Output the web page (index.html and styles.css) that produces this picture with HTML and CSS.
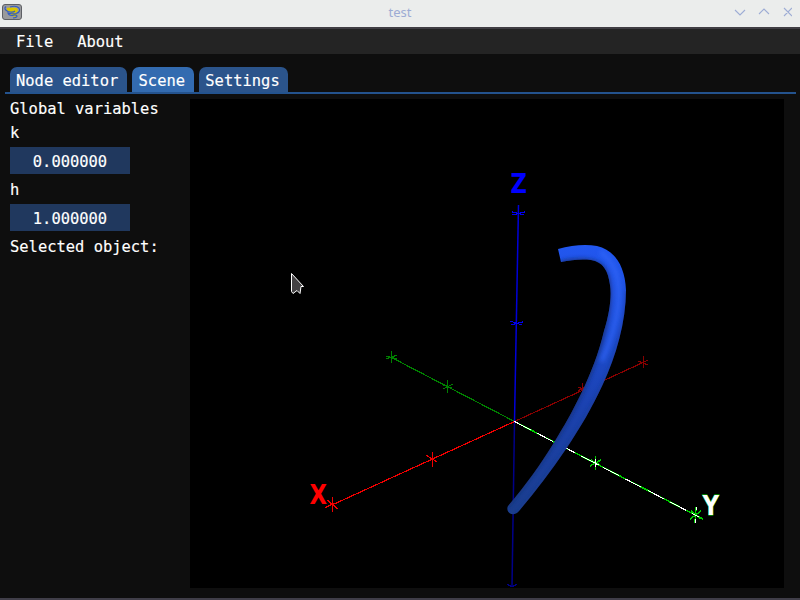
FILE: index.html
```html
<!DOCTYPE html>
<html lang="en">
<head>
<meta charset="utf-8">
<title>test</title>
<link rel="stylesheet" href="styles.css">
</head>
<body>
<header class="titlebar">
  <svg class="app-icon" width="20" height="16" viewBox="0 0 20 16">
    <rect x=".5" y=".5" width="19" height="15" rx="2.5" fill="#999a9c" stroke="#5e6065"/>
    <path d="M5 4Q8 3 15 4Q17 7 14 9Q9 9 6 7Q4 6 5 4M9 9L15 9Q16 12 13 13L9 11Z" fill="#d8c400"/>
    <path d="M4 2.500Q1 5 6 7.500Q11 9 13 7M8 3Q14 1 17 4Q19 8 14 9.500Q7 10 6 9Q6 11 10 11.500Q14 10 15 12Q15 13.500 11 14" fill="none" stroke="#315cc0" stroke-width="1.1"/>
  </svg>
  <h1 class="title">test</h1>
  <svg class="window-buttons" width="60" height="14" viewBox="0 0 60 14" fill="none" stroke="#9eadd5" stroke-width="1.1">
    <path d="M3 5L8 10L13 5M27 9L32 4L37 9M52 3L60 11M60 3L52 11"/>
  </svg>
</header>
<nav class="menubar"><span>File</span><span>About</span></nav>
<main class="workspace">
  <div class="tabs">
    <div class="tab">Node editor</div>
    <div class="tab active">Scene</div>
    <div class="tab">Settings</div>
  </div>
  <div class="content">
    <aside class="sidebar">
      <div class="label">Global variables</div>
      <div class="label">k</div>
      <div class="field">0.000000</div>
      <div class="label">h</div>
      <div class="field">1.000000</div>
      <div class="label">Selected object:</div>
    </aside>
    <svg class="scene" width="594" height="489" viewBox="190 99 594 489">
      <defs>
        <linearGradient id="tube" gradientUnits="userSpaceOnUse" x1="0" y1="245" x2="0" y2="515">
          <stop offset="0" stop-color="#2257f0"/><stop offset=".3" stop-color="#1d4dd4"/>
          <stop offset=".6" stop-color="#1b42b0"/><stop offset="1" stop-color="#1b3e8c"/>
        </linearGradient>
        <clipPath id="tube-clip"><path d="M558 249C572 245 586 244 597 246C614 250 625 265 626 290C626 322 616 356 603 384C592 408 580 428 566 449C551 471 536 491 519 511C513 518 505 512 508 506C525 486 541 464 555 441C571 415 594 374 604 331C609 315 612 297 610 285C608 270 603 262 591 260C581 259 571 260 561 262Z"/></clipPath>
        <filter id="soft" filterUnits="userSpaceOnUse" x="480" y="220" width="180" height="320"><feGaussianBlur stdDeviation="2"/></filter>
      </defs>
      <rect x="190" y="99" width="594" height="489" fill="#000"/>
      <g fill="none" shape-rendering="crispEdges" stroke-width="1.2">
        <path stroke="#880000" d="M514.5 421.5L643 362.5M643.5 356V368M638 361L648 365M638 365L648 360M582.500 383V394M578 387L587 391M578 391L587 386"/>
        <path stroke="#008000" d="M514.500 421.500L391.500 357.500M391.500 351V363M386 356L397 359M386 359L397 355M447.500 380V393M443 385L452 388M443 389L453 384"/>
        <path stroke="#0000d8" stroke-width="1.500" shape-rendering="auto" d="M514.500 421.500L518.500 205"/>
        <path stroke="#0000f0" d="M512 212L524 215M512 215L525 212M510 321L522 325M511 325L523 322"/>
        <path stroke="#000088" stroke-width="1.500" shape-rendering="auto" d="M514.500 421.500L512 587"/>
        <path stroke="#000088" d="M507 584L512 587L517 584"/>
        <path stroke="#f00000" d="M514.500 421.500L332 505M332.500 497V512M325 508L334 503M327 500L338 509M432.500 452V467M426 455L437 462M427 462L438 456"/>
        <path stroke="#00cc00" stroke-width="1.500" d="M514.500 421.500L703 519M595.500 456V470M590 466L601 460M591 460L600 465M696 507L695 523M690 519L701 511M691 511L700 518"/>
        <path stroke="#fff" stroke-width="1" stroke-dasharray="18 7" d="M514.500 421.500L699 517"/>
        <path stroke="#fff" stroke-width="1" d="M595.500 459V467M593 462L599 465M696 507V510M695 519V523"/>
      </g>
      <g clip-path="url(#tube-clip)">
        <rect x="500" y="240" width="130" height="280" fill="url(#tube)"/>
        <g filter="url(#soft)" fill="none">
          <path stroke="#162d70" stroke-width="4" opacity=".9" d="M561 263C582 259 593 260 601 266C611 275 611 297 604 330C590 385 560 440 507 506"/>
          <path stroke="#17368a" stroke-width="3" opacity=".7" d="M627 290C627 322 616 358 603 385C580 433 551 473 518 514"/>
          <path stroke="#2f66fa" stroke-width="4" opacity=".8" d="M600 252C616 262 621 280 618 306C616 325 609 345 602 361"/>
        </g>
      </g>
      <g class="axis-labels">
        <text x="309.500" y="503.500" textLength="17.500" lengthAdjust="spacingAndGlyphs" fill="#f00">X</text>
        <text x="702.500" y="515" textLength="16.500" lengthAdjust="spacingAndGlyphs" fill="#fff" stroke="#0c0" stroke-width=".8" paint-order="stroke">Y</text>
        <text x="510.500" y="192.500" textLength="16.500" lengthAdjust="spacingAndGlyphs" fill="#00f">Z</text>
      </g>
      <path d="M291.500 273.500V291.500L293 293.500L297 290.500L300 293.500L301 286.500H303.500Z" fill="#444244" stroke="#fff" stroke-width="1"/>
    </svg>
  </div>
</main>
</body>
</html>
```
FILE: styles.css
```css
* { box-sizing: border-box; }
body {
  margin: 0;
  width: 800px;
  height: 600px;
  overflow: hidden;
  display: flex;
  flex-direction: column;
  background: #0e0e0e;
  color: #fff;
  font: 15.45px/19px "DejaVu Sans Mono", monospace;
  -webkit-text-stroke: .15px;
  border-bottom: 2px solid #403e49;
}
.titlebar {
  height: 29px;
  flex: none;
  display: grid;
  grid-template-columns: 80px 1fr 80px;
  background: #ebedec;
  border-bottom: 2px solid #403e43;
}
.app-icon { margin: 4px 0 0 2px; }
.title {
  margin: 3px 0 0;
  text-align: center;
  font: 13px/19px "Noto Sans", sans-serif;
  color: #9dacd4;
  -webkit-text-stroke: 0;
}
.window-buttons { margin: 5px 0 0 12px; }
.menubar {
  height: 25px;
  flex: none;
  display: flex;
  gap: 24px;
  padding: 4px 16px 2px;
  background: #242424;
}
.workspace { padding-top: 13px; }
.tabs {
  display: flex;
  gap: 5px;
  height: 27px;
  margin: 0 4px 0 5px;
  padding-left: 4.5px;
  border-bottom: 2px solid #24538e;
}
.tab {
  height: 25px;
  padding: 5px 8.800px 0 6.500px;
  border-radius: 7px 7px 0 0;
  background: #2b548b;
}
.tab.active { background: #336bb0; }
.content { display: flex; padding-top: 5px; }
.sidebar {
  width: 190px;
  flex: none;
  padding: 1px 0 0 10px;
  display: flex;
  flex-direction: column;
  gap: 5px;
}
.label { height: 19px; }
.field {
  width: 120px;
  height: 27px;
  margin: -1px 0 2px;
  padding-top: 6px;
  background: #20385e;
  text-align: center;
}
.scene { display: block; }
.axis-labels { font: bold 26px "DejaVu Sans", sans-serif; -webkit-text-stroke: 0; }
```
